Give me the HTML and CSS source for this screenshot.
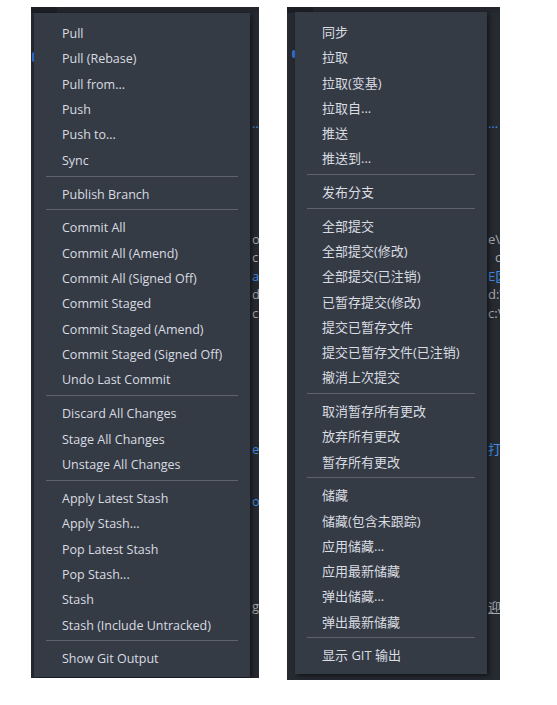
FILE: index.html
```html
<!DOCTYPE html>
<html lang="en">
<head>
    <meta charset="UTF-8">
    <title>Git Menu</title>
    <link rel="stylesheet" href="styles.css">
</head>
<body>
    <div class="stage">
        <div class="editor editor-en">
            <div class="tabs"><span class="tab-dark"></span></div>
            <div class="gutter-mark"></div>
            <div class="code code-en">
                <div class="line link line-top">…</div>
                <div class="line line-mid">o</div>
                <div class="line">c</div>
                <div class="line link">ac</div>
                <div class="line">d</div>
                <div class="line">c:</div>
                <div class="line link line-far">ea</div>
                <div class="line link line-near">on</div>
                <div class="line line-end">g</div>
            </div>

            <ul class="menu menu-en">
                <li class="item">Pull</li>
                <li class="item">Pull (Rebase)</li>
                <li class="item">Pull from...</li>
                <li class="item">Push</li>
                <li class="item">Push to...</li>
                <li class="item">Sync</li>
                <li class="sep"></li>
                <li class="item">Publish Branch</li>
                <li class="sep"></li>
                <li class="item">Commit All</li>
                <li class="item">Commit All (Amend)</li>
                <li class="item">Commit All (Signed Off)</li>
                <li class="item">Commit Staged</li>
                <li class="item">Commit Staged (Amend)</li>
                <li class="item">Commit Staged (Signed Off)</li>
                <li class="item">Undo Last Commit</li>
                <li class="sep"></li>
                <li class="item">Discard All Changes</li>
                <li class="item">Stage All Changes</li>
                <li class="item">Unstage All Changes</li>
                <li class="sep"></li>
                <li class="item">Apply Latest Stash</li>
                <li class="item">Apply Stash...</li>
                <li class="item">Pop Latest Stash</li>
                <li class="item">Pop Stash...</li>
                <li class="item">Stash</li>
                <li class="item">Stash (Include Untracked)</li>
                <li class="sep"></li>
                <li class="item">Show Git Output</li>
            </ul>
        </div>

        <div class="editor editor-zh">
            <div class="tabs"><span class="tab-dark"></span></div>
            <div class="gutter-mark"></div>
            <div class="code code-zh">
                <div class="line link line-top">…</div>
                <div class="line line-mid">e\</div>
                <div class="line indent">c</div>
                <div class="line link">E区</div>
                <div class="line">d:\</div>
                <div class="line">c:\</div>
                <div class="line link line-far">打印</div>
                <div class="line line-end2 under">迎</div>
            </div>

            <ul class="menu menu-zh">
                <li class="item">同步</li>
                <li class="item">拉取</li>
                <li class="item">拉取(变基)</li>
                <li class="item">拉取自...</li>
                <li class="item">推送</li>
                <li class="item">推送到...</li>
                <li class="sep"></li>
                <li class="item">发布分支</li>
                <li class="sep"></li>
                <li class="item">全部提交</li>
                <li class="item">全部提交(修改)</li>
                <li class="item">全部提交(已注销)</li>
                <li class="item">已暂存提交(修改)</li>
                <li class="item">提交已暂存文件</li>
                <li class="item">提交已暂存文件(已注销)</li>
                <li class="item">撤消上次提交</li>
                <li class="sep"></li>
                <li class="item">取消暂存所有更改</li>
                <li class="item">放弃所有更改</li>
                <li class="item">暂存所有更改</li>
                <li class="sep"></li>
                <li class="item">储藏</li>
                <li class="item">储藏(包含未跟踪)</li>
                <li class="item">应用储藏...</li>
                <li class="item">应用最新储藏</li>
                <li class="item">弹出储藏...</li>
                <li class="item">弹出最新储藏</li>
                <li class="sep"></li>
                <li class="item">显示 GIT 输出</li>
            </ul>
        </div>
    </div>
</body>
</html>
```

FILE: styles.css
```css
body {
    margin: 0;
    background: #fff;
    font-family: "Open Sans", "Noto Sans CJK SC", sans-serif;
}
.stage {
    display: flex;
    align-items: flex-start;
    gap: 28px;
    padding: 7px 0 0 31px;
}
.editor {
    position: relative;
    background: #262a31;
    overflow: hidden;
}
.editor-en {
    width: 228px;
    height: 671px;
}
.editor-zh {
    width: 213px;
    height: 673px;
}
.tabs {
    height: 6px;
    background: #23262d;
}
.tab-dark {
    display: block;
    width: 26px;
    height: 6px;
    background: #1c1f24;
}
.gutter-mark {
    position: absolute;
    left: 1px;
    top: 45px;
    width: 4px;
    height: 10px;
    border-radius: 2px;
    background: #2f6fd6;
}
.editor-zh .gutter-mark {
    left: 5px;
    top: 43px;
    height: 8px;
}
.code {
    font-size: 13px;
    color: #a9adb4;
    white-space: nowrap;
}
.code-en {
    padding-left: 221px;
}
.code-zh {
    padding-left: 201px;
}
.line {
    height: 18.5px;
    line-height: 18.5px;
}
.link {
    color: #3f8fe8;
}
.indent {
    padding-left: 7px;
}
.under {
    text-decoration: underline;
}
.line-top {
    margin-top: 101px;
}
.line-mid {
    margin-top: 97px;
}
.line-far {
    margin-top: 118px;
}
.line-near {
    margin-top: 33px;
}
.line-end {
    margin-top: 87px;
}
.line-end2 {
    margin-top: 139px;
}
.menu {
    position: absolute;
    list-style: none;
    margin: 0;
    padding: 8px 0 5px;
    background: #353b45;
    box-shadow: 2px 2px 5px rgba(0, 0, 0, 0.55);
}
.menu-en {
    left: 3px;
    top: 6px;
    width: 216px;
}
.menu-zh {
    left: 8px;
    top: 5px;
    width: 192px;
}
.item {
    height: 25.35px;
    line-height: 25.35px;
    padding-left: 28px;
    font-size: 12.5px;
    color: #d9dce1;
    white-space: nowrap;
}
.menu-zh .item {
    height: 25.25px;
    line-height: 25.25px;
    padding-left: 27px;
    font-size: 13px;
}
.sep {
    height: 1px;
    margin: 2.5px 12px 5px;
    background: #5e626a;
}
```
